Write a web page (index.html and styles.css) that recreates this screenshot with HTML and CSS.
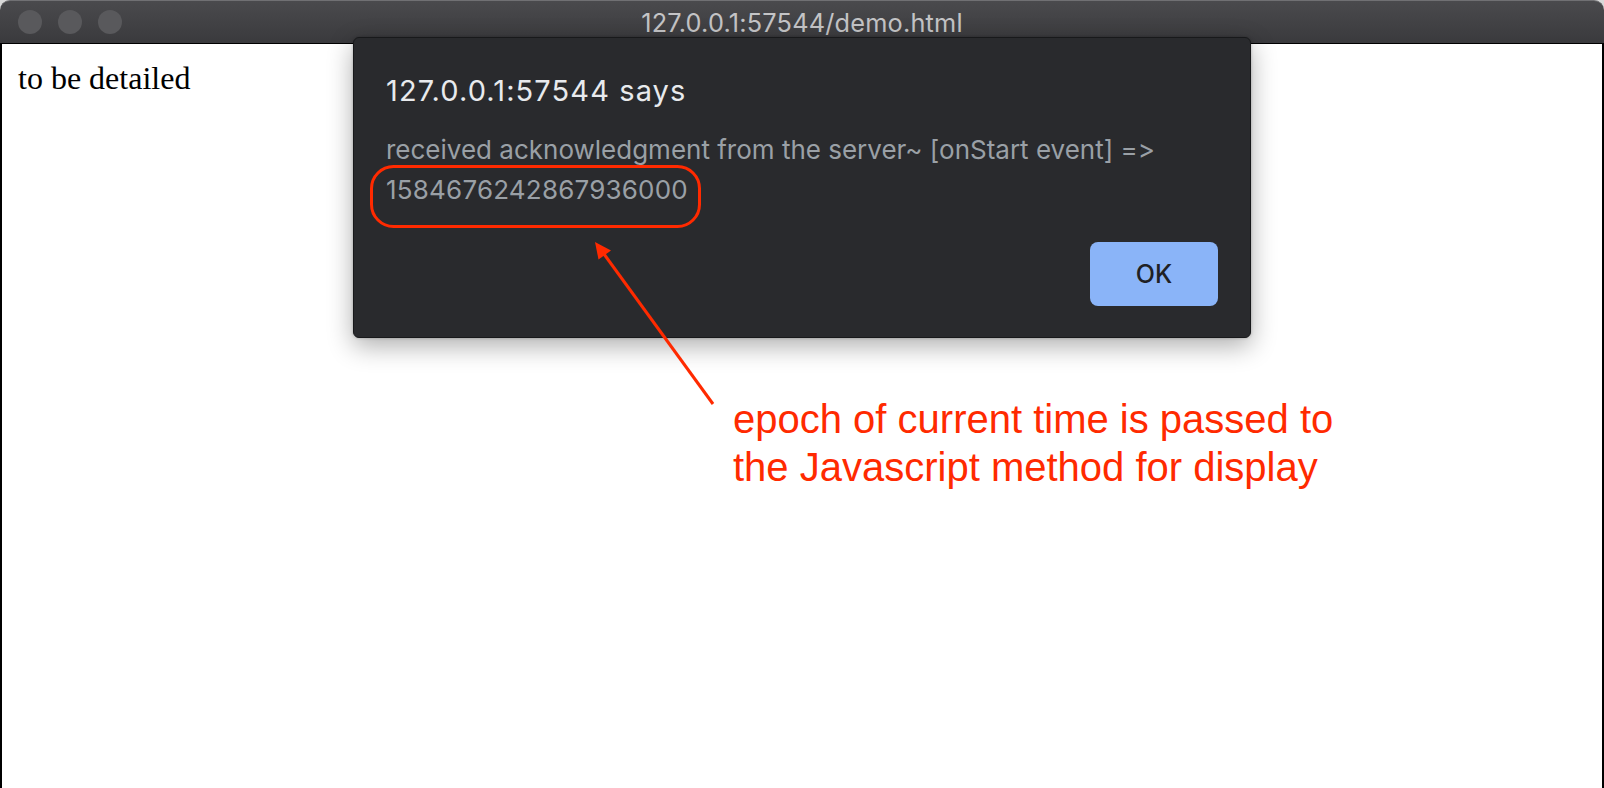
FILE: index.html
```html
<!DOCTYPE html>
<html>
<head>
<meta charset="utf-8">
<link rel="stylesheet" href="styles.css">
</head>
<body>
<div class="window">
  <div class="titlebar">
    <div class="lights">
      <span class="light"></span>
      <span class="light"></span>
      <span class="light"></span>
    </div>
    <div class="title">127.0.0.1:57544/demo.html</div>
    <div class="spacer"></div>
  </div>
  <div class="content">
    <p class="page-text">to be detailed</p>
  </div>

  <div class="dialog">
    <div class="dialog-title">127.0.0.1:57544 says</div>
    <div class="dialog-msg">received acknowledgment from the server~ [onStart event] =&gt;<br><span class="epoch">1584676242867936000</span></div>
    <div class="dialog-actions">
      <button class="ok-btn">OK</button>
    </div>
  </div>

  <svg class="annot" width="1604" height="788" viewBox="0 0 1604 788">
    <rect x="371.5" y="166.5" width="328" height="60" rx="22" ry="22" fill="none" stroke="#ff2a00" stroke-width="3"/>
    <line x1="713" y1="404" x2="604" y2="254" stroke="#ff2a00" stroke-width="3"/>
    <polygon points="595,242 598.5,259.5 611,250.5" fill="#ff2a00"/>
  </svg>
  <div class="note">epoch of current time is passed to<br>the Javascript method for display</div>
</div>
</body>
</html>
```

FILE: styles.css
```css
html, body {
  margin: 0;
  padding: 0;
}
body {
  background: #d9d9d9;
  width: 1604px;
  height: 788px;
  overflow: hidden;
}
.window {
  position: relative;
  width: 1604px;
  height: 788px;
  display: flex;
  flex-direction: column;
}
.titlebar {
  height: 43px;
  flex: 0 0 43px;
  box-sizing: border-box;
  display: grid;
  grid-template-columns: 1fr auto 1fr;
  align-items: center;
  background: linear-gradient(#4a4a4d, #3a3a3d);
  border-top: 1px solid #707073;
  border-radius: 10px 10px 0 0;
}
.lights {
  display: flex;
  gap: 16px;
  padding-left: 18px;
}
.light {
  width: 24px;
  height: 24px;
  border-radius: 50%;
  background: #59595c;
}
.title {
  font-family: Inter, "Noto Sans", sans-serif;
  font-size: 25.3px;
  color: #c4c4c6;
  letter-spacing: 0.2px;
}
.content {
  flex: 1;
  background: #fff;
  border-top: 1px solid #000;
  border-left: 2px solid #000;
  border-right: 2px solid #000;
}
.page-text {
  margin: 0;
  padding: 16px 16px;
  font-family: "Liberation Serif", serif;
  font-size: 32px;
  color: #000;
}
.dialog {
  position: absolute;
  left: 353px;
  top: 37px;
  width: 898px;
  box-sizing: border-box;
  padding: 35px 32px 31px 32px;
  background: #292a2d;
  border: 1px solid #18191b;
  border-radius: 6px;
  box-shadow: 0 8px 26px rgba(0, 0, 0, 0.32), 0 0 3px rgba(0, 0, 0, 0.25);
  font-family: Inter, "Noto Sans", sans-serif;
  font-variant-ligatures: none;
  font-feature-settings: "calt" 0, "liga" 0;
}
.dialog-title {
  font-size: 29px;
  line-height: 36px;
  letter-spacing: 1.1px;
  color: #e8eaed;
}
.dialog-msg {
  margin-top: 21px;
  font-size: 26px;
  line-height: 40px;
  letter-spacing: 0;
  color: #9aa0a6;
}
.epoch {
  letter-spacing: 0.2px;
}
.dialog-actions {
  margin-top: 32px;
  display: flex;
  justify-content: flex-end;
}
.ok-btn {
  width: 128px;
  height: 64px;
  border: none;
  border-radius: 8px;
  background: #8ab4f8;
  color: #202124;
  font-family: Inter, "Noto Sans", sans-serif;
  font-size: 25px;
  font-weight: 500;
  padding: 0;
}
.annot {
  position: absolute;
  left: 0;
  top: 0;
  pointer-events: none;
}
.note {
  position: absolute;
  left: 733px;
  top: 395px;
  font-family: "Liberation Sans", Arial, sans-serif;
  font-size: 40px;
  line-height: 48px;
  color: #ff2a00;
  white-space: nowrap;
}
```
